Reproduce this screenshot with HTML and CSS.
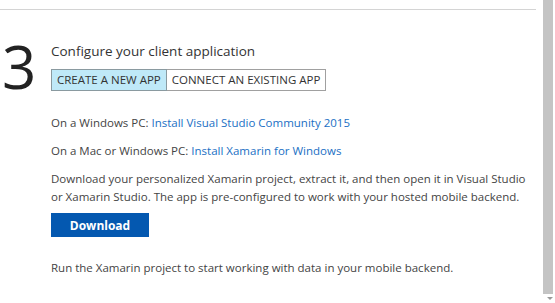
FILE: index.html
```html
<!DOCTYPE html>
<html>
<head>
<meta charset="utf-8">
<link rel="stylesheet" href="styles.css">
</head>
<body>
<div class="page">
  <main class="main">
    <div class="topline"></div>
    <section class="step">
      <div class="num">3</div>
      <div class="content">
        <h2 class="title">Configure your client application</h2>
        <div class="tabs">
          <span class="tab active">CREATE A NEW APP</span><span class="tab">CONNECT AN EXISTING APP</span>
        </div>
        <p class="line first">On a Windows PC: <a href="#">Install Visual Studio Community 2015</a></p>
        <p class="line">On a Mac or Windows PC: <a href="#">Install Xamarin for Windows</a></p>
        <p class="line para">Download your personalized Xamarin project, extract it, and then open it in Visual Studio or Xamarin Studio. The app is pre-configured to work with your hosted mobile backend.</p>
        <button class="btn">Download</button>
        <p class="line last">Run the Xamarin project to start working with data in your mobile backend.</p>
      </div>
    </section>
  </main>
  <div class="scrollbar">
    <div class="thumb"></div>
    <div class="arrow"></div>
  </div>
</div>
</body>
</html>
```
FILE: styles.css
```css
html, body {
  margin: 0;
  padding: 0;
  background: #fff;
}
body {
  font-family: "Open Sans", "Noto Sans", sans-serif;
  color: #333;
  width: 555px;
  height: 303px;
  overflow: hidden;
}
.page {
  display: flex;
  height: 303px;
}
.main {
  flex: 1;
  padding-right: 7px;
}
.topline {
  height: 9px;
  border-bottom: 1px solid #d4d4d4;
}
.step {
  display: flex;
  padding-top: 32px;
}
.num {
  width: 51px;
  flex: none;
  font-size: 60px;
  line-height: 56px;
  margin-top: -4px;
  color: #222;
  font-weight: 400;
  text-indent: 2px;
}
.content {
  flex: 1;
}
.title {
  margin: 0;
  font-size: 13.5px;
  font-weight: 400;
  line-height: 18px;
  color: #333;
}
.tabs {
  display: flex;
  margin-top: 9px;
}
.tab {
  font-size: 11.5px;
  line-height: 20px;
  height: 20px;
  padding: 0 5px;
  border: 1px solid #a0a0a0;
  color: #333;
  background: #fff;
}
.tab + .tab {
  border-left: none;
}
.tab.active {
  background: #bfe9f8;
  border-color: #8a9aa0;
}
.line {
  margin: 0;
  font-size: 11.5px;
  line-height: 18px;
  color: #444;
}
.line a {
  color: #1a6fc4;
  text-decoration: none;
}
.first {
  margin-top: 23px;
}
.line + .line {
  margin-top: 10px;
}
.para {
  padding-right: 4px;
}
.btn {
  display: block;
  margin-top: 7px;
  width: 98px;
  height: 24px;
  border: none;
  background: #0458b0;
  color: #fff;
  font-family: "Open Sans", "Noto Sans", sans-serif;
  font-weight: 700;
  font-size: 12px;
  padding: 0;
}
.last {
  margin-top: 22px;
}
.scrollbar {
  width: 12px;
  flex: none;
  position: relative;
  background: #fff;
}
.thumb {
  width: 10px;
  height: 294px;
  background: #c4c4c4;
}
.arrow {
  position: absolute;
  left: 4px;
  bottom: 3px;
  width: 0;
  height: 0;
  border-left: 3px solid transparent;
  border-right: 3px solid transparent;
  border-top: 3px solid #999;
}
```
